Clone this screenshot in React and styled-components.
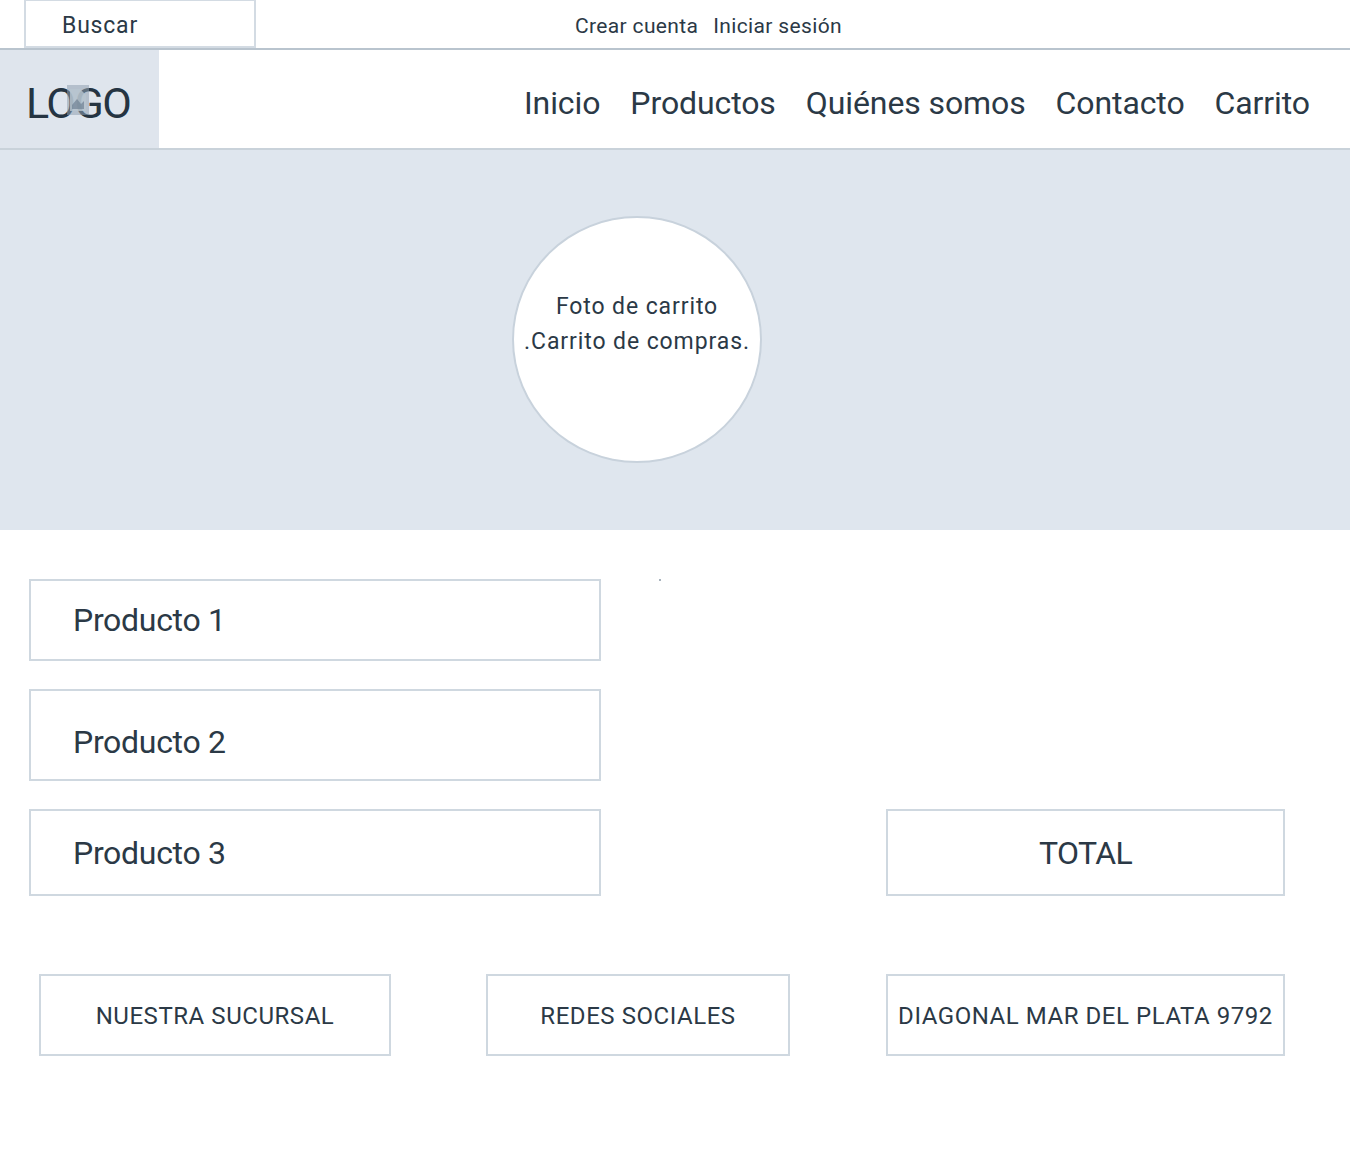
import React from "react";
import styled, { createGlobalStyle } from "styled-components";

const Global = createGlobalStyle`
  html, body { margin: 0; padding: 0; background: #fff; }
  body { font-family: Roboto, "Noto Sans", "DejaVu Sans", sans-serif; color: #2b3946; }
  * { box-sizing: border-box; }
`;

const Page = styled.div`
  width: 1350px;
  min-height: 1155px;
  background: #fff;
`;

const TopBar = styled.div`
  height: 50px;
  display: flex;
  align-items: stretch;
  border-bottom: 2px solid #b9c4ce;
  padding-left: 24px;
`;

const SearchBox = styled.div`
  width: 232px;
  height: 48px;
  border: 2px solid #d3dbe3;
  border-top-width: 1px;
  display: flex;
  align-items: center;
  padding: 4px 0 0 36px;
  font-size: 23px;
  letter-spacing: 0.8px;
`;

const AccountLinks = styled.div`
  display: flex;
  align-items: center;
  gap: 15px;
  margin-left: 319px;
  padding-top: 4px;
  font-size: 21px;
  letter-spacing: 0.35px;
`;

const Header = styled.header`
  height: 100px;
  display: flex;
  align-items: stretch;
  border-bottom: 2px solid #c9d2da;
`;

const LogoBox = styled.div`
  position: relative;
  width: 159px;
  background: #dfe5ed;
  display: flex;
  align-items: center;
  padding: 8px 0 0 26px;
  font-size: 43px;
  letter-spacing: -1.5px;
  color: #253442;
`;

const BrokenImg = styled.svg`
  position: absolute;
  left: 67px;
  top: 35px;
`;

const Nav = styled.nav`
  flex: 1;
  display: flex;
  justify-content: flex-end;
  align-items: center;
  gap: 30px;
  padding-right: 40px;
  padding-top: 7px;
  font-size: 32px;
`;

const NavItem = styled.span`
  letter-spacing: -0.1px;
`;

const Hero = styled.section`
  height: 380px;
  background: #dfe6ee;
  display: flex;
  justify-content: center;
  padding-top: 66px;
  padding-right: 76px;
`;

const Circle = styled.div`
  width: 250px;
  height: 247px;
  border-radius: 50%;
  background: #fff;
  border: 2px solid #c8d2dc;
  display: flex;
  flex-direction: column;
  align-items: center;
  padding-top: 71px;
  font-size: 23px;
  line-height: 35px;
  letter-spacing: 0.9px;
  white-space: nowrap;
`;

const Content = styled.main`
  display: grid;
  grid-template-columns: 572px 285px 399px;
  grid-template-rows: 82px 92px 87px;
  row-gap: 28px;
  margin: 49px 0 0 29px;
`;

const Box = styled.div`
  border: 2px solid #cfd8e0;
  display: flex;
  align-items: center;
  justify-content: ${(p) => (p.$center ? "center" : "flex-start")};
  padding-left: ${(p) => (p.$center ? "0" : "42px")};
  padding-top: ${(p) => p.$shift || 0}px;
  font-size: 32px;
  letter-spacing: ${(p) => (p.$center ? "-0.6px" : "-0.3px")};
  grid-column: ${(p) => p.$col || "auto"};
  grid-row: ${(p) => p.$row || "auto"};
`;

const Dot = styled.span`
  grid-column: 2;
  grid-row: 1;
  width: 2px;
  height: 2px;
  background: #a8b3bd;
  margin: 0 0 0 58px;
`;

const Footer = styled.footer`
  display: flex;
  margin: 78px 0 0 39px;
  height: 82px;
`;

const FooterBox = styled(Box)`
  width: ${(p) => p.$w}px;
  margin-left: ${(p) => p.$ml || 0}px;
  font-size: 24px;
  letter-spacing: 0.55px;
  padding: 2px 0 0;
  justify-content: center;
`;

export default function App() {
  return (
    <Page>
      <Global />
      <TopBar>
        <SearchBox>Buscar</SearchBox>
        <AccountLinks>
          <span>Crear cuenta</span>
          <span>Iniciar sesión</span>
        </AccountLinks>
      </TopBar>
      <Header>
        <LogoBox>
          LOGO
          <BrokenImg width="22" height="30" viewBox="0 0 22 30">
            <rect x="0" y="0" width="22" height="30" fill="#8fa0b0" opacity="0.55" />
            <path d="M3 4h10l6 6v16H3z" fill="#b8c5d0" opacity="0.8" />
            <path d="M5 20l5-6 4 5 3-3v8H5z" fill="#6f8294" opacity="0.7" />
          </BrokenImg>
        </LogoBox>
        <Nav>
          <NavItem>Inicio</NavItem>
          <NavItem>Productos</NavItem>
          <NavItem>Quiénes somos</NavItem>
          <NavItem>Contacto</NavItem>
          <NavItem>Carrito</NavItem>
        </Nav>
      </Header>
      <Hero>
        <Circle>
          <span>Foto de carrito</span>
          <span>.Carrito de compras.</span>
        </Circle>
      </Hero>
      <Content>
        <Box $col="1" $row="1">Producto 1</Box>
        <Dot />
        <Box $col="1" $row="2" $shift={14}>Producto 2</Box>
        <Box $col="1" $row="3">Producto 3</Box>
        <Box $col="3" $row="3" $center>TOTAL</Box>
      </Content>
      <Footer>
        <FooterBox $w={352}>NUESTRA SUCURSAL</FooterBox>
        <FooterBox $w={304} $ml={95}>REDES SOCIALES</FooterBox>
        <FooterBox $w={399} $ml={96}>DIAGONAL MAR DEL PLATA 9792</FooterBox>
      </Footer>
    </Page>
  );
}
